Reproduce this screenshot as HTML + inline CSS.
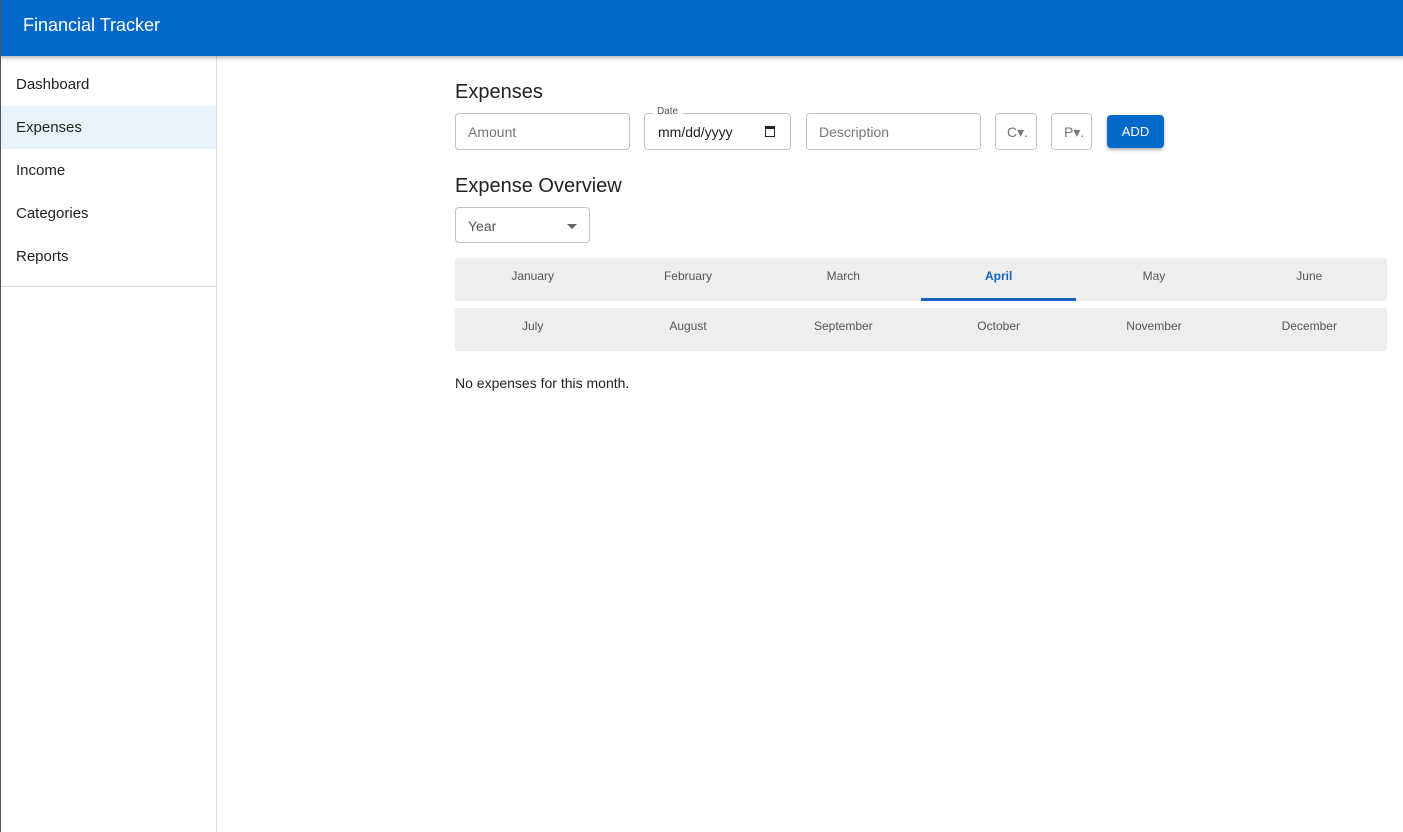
<!DOCTYPE html>
<html><head><style>
*{box-sizing:border-box;margin:0;padding:0}
body{width:1403px;height:832px;overflow:hidden;font-family:"Liberation Sans",Arial,sans-serif;background:#fff;position:relative;color:#222}
.left{position:absolute;left:0;top:0;width:1px;height:832px;background:#555;z-index:5}
.hdr{position:absolute;left:0;top:0;width:1403px;height:56px;background:#0169c9;box-shadow:0 2px 4px rgba(0,0,0,.3);z-index:3;color:#fff;font-size:18px;padding:15px 0 0 23px}
.side{position:absolute;left:0;top:56px;width:217px;height:776px;border-right:1px solid #ddd;padding-top:7px}
.side div{height:43px;line-height:43px;padding-left:16px;font-size:15px;color:#222}
.side .act{background:#e9f1fa}
.side hr{border:0;border-top:1px solid #ddd;margin-top:8px}
.h{position:absolute;font-size:20px;color:#222}
.in{position:absolute;top:113px;height:37px;border:1px solid #c4c4c4;border-radius:4px;font-size:14px;color:#777;padding:10px 12px}
.btn{position:absolute;left:1107px;top:115px;width:57px;height:33px;background:#0169c9;border-radius:4px;color:#fff;font-size:13px;text-align:center;line-height:33px;box-shadow:0 2px 3px rgba(0,0,0,.3)}
.tabs{position:absolute;left:455px;width:932px;height:43px;background:#eee;border-radius:3px;display:flex}
.tabs div{flex:1;text-align:center;font-size:12px;color:#555;line-height:36px;position:relative}
.tabs .a{color:#1565c0;font-weight:bold}
.tabs .a:after{content:"";position:absolute;left:0;right:0;bottom:0;height:3px;background:#1565c0}
</style></head><body>
<div class="left"></div>
<div class="hdr">Financial Tracker</div>
<div class="side"><div>Dashboard</div><div class="act">Expenses</div><div>Income</div><div>Categories</div><div>Reports</div><hr></div>
<div class="h" style="left:455px;top:81px">Expenses</div>
<div class="in" style="left:455px;width:175px">Amount</div>
<div class="in" style="left:644px;width:147px;color:#222;padding-left:13px">mm/dd/yyyy<span style="position:absolute;top:-8px;background:#fff;padding:0 4px;font-size:10px;color:#555;left:8px">Date</span><span style="position:absolute;right:15px;top:12px;width:10px;height:11px;border:1.5px solid #222;border-top-width:3px"></span></div>
<div class="in" style="left:806px;width:175px">Description</div>
<div class="in" style="left:995px;width:42px;padding-left:11px">C▾.</div>
<div class="in" style="left:1051px;width:41px;padding-left:12px">P▾.</div>
<div class="btn">ADD</div>
<div class="h" style="left:455px;top:175px">Expense Overview</div>
<div class="in" style="left:455px;top:207px;width:135px;height:36px;color:#555">Year<span style="position:absolute;right:12px;top:16px;border:5px solid transparent;border-top:5px solid #666;border-bottom:0"></span></div>
<div class="tabs" style="top:258px"><div>January</div><div>February</div><div>March</div><div class="a">April</div><div>May</div><div>June</div></div>
<div class="tabs" style="top:308px"><div>July</div><div>August</div><div>September</div><div>October</div><div>November</div><div>December</div></div>
<div style="position:absolute;left:455px;top:375px;font-size:14px">No expenses for this month.</div>
</body></html>
